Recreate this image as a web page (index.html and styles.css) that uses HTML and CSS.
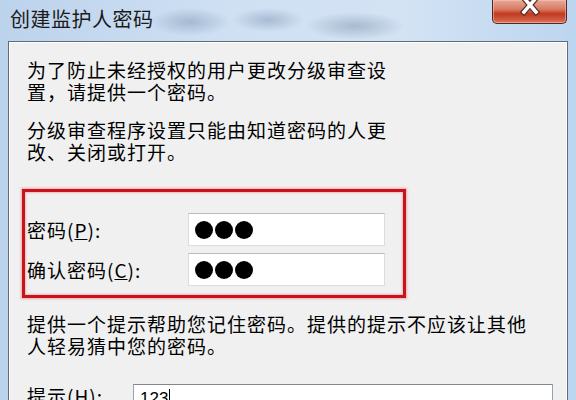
FILE: index.html
```html
<!DOCTYPE html>
<html lang="zh-CN">
<head>
    <meta charset="UTF-8">
    <title>创建监护人密码</title>
    <link rel="stylesheet" href="styles.css">
</head>
<body>
    <div class="window">
        <div class="titlebar">
            <span class="title">创建监护人密码</span>
            <div class="close-btn">
                <svg width="26" height="16" viewBox="0 0 26 16">
                    <path d="M7 -2 L19 12 M19 -2 L7 12" stroke="#5a2b25" stroke-width="6" stroke-linecap="square"/>
                    <path d="M7 -2 L19 12 M19 -2 L7 12" stroke="#ffffff" stroke-width="3.6" stroke-linecap="square"/>
                </svg>
            </div>
        </div>

        <div class="panel">
            <p class="text first">为了防止未经授权的用户更改分级审查设<br>置，请提供一个密码。</p>
            <p class="text second">分级审查程序设置只能由知道密码的人更<br>改、关闭或打开。</p>

            <div class="highlight">
                <div class="field-row">
                    <label>密码(<u>P</u>):</label>
                    <div class="input">
                        <span class="dot"></span><span class="dot"></span><span class="dot"></span>
                    </div>
                </div>
                <div class="field-row">
                    <label>确认密码(<u>C</u>):</label>
                    <div class="input">
                        <span class="dot"></span><span class="dot"></span><span class="dot"></span>
                    </div>
                </div>
            </div>

            <p class="text third">提供一个提示帮助您记住密码。提供的提示不应该让其他<br>人轻易猜中您的密码。</p>

            <div class="hint-row">
                <label>提示(<u>H</u>):</label>
                <div class="input hint-input">123<span class="caret"></span></div>
            </div>
        </div>
    </div>
</body>
</html>
```

FILE: styles.css
```css
body {
    margin: 0;
    width: 576px;
    height: 400px;
    overflow: hidden;
    font-family: "Noto Sans CJK SC", "Noto Sans", sans-serif;
    color: #000000;
    background-color: #b9d2ec;
}

.window {
    height: 400px;
    background:
        radial-gradient(ellipse 40px 14px at 190px 22px, rgba(120, 140, 170, 0.45), rgba(120, 140, 170, 0) 100%),
        radial-gradient(ellipse 36px 12px at 268px 20px, rgba(110, 130, 160, 0.4), rgba(110, 130, 160, 0) 100%),
        radial-gradient(ellipse 50px 14px at 355px 26px, rgba(110, 125, 150, 0.4), rgba(110, 125, 150, 0) 100%),
        linear-gradient(to right, #bcd3ec 0%, #cfe0f3 40%, #d3e3f4 70%, #bcd5ef 100%);
}

.titlebar {
    height: 41px;
    display: flex;
    align-items: flex-start;
}

.title {
    margin-left: 10px;
    margin-top: 6px;
    font-size: 20px;
    line-height: 26px;
    letter-spacing: 0.5px;
    color: #1b1b1b;
}

.close-btn {
    margin-left: auto;
    margin-right: 9px;
    width: 73px;
    height: 23px;
    border: 1px solid #4e2a26;
    border-top: none;
    border-radius: 0 0 5px 5px;
    background: linear-gradient(to bottom, #e7aa98 0%, #d77a63 40%, #c2391f 60%, #cf5a40 85%, #dc7a60 100%);
    box-shadow: inset 0 0 0 1px rgba(255, 200, 190, 0.5);
    display: flex;
    justify-content: center;
    align-items: flex-start;
}

.panel {
    margin: 0 8px;
    height: 380px;
    border: 1px solid #5f6b78;
    box-shadow: inset 0 0 0 1px #ffffff;
    background-color: #f0f0f0;
    padding-left: 18px;
}

.text {
    margin: 0;
    font-size: 19px;
    line-height: 22px;
    letter-spacing: 1px;
}

.first {
    padding-top: 17px;
}

.second {
    margin-top: 16px;
}

.highlight {
    margin-top: 26px;
    margin-left: -5px;
    width: 384px;
    height: 109px;
    border: 3px solid #c7141c;
    box-shadow: 0 0 2px 1px rgba(240, 120, 120, 0.6), inset 0 0 2px 1px rgba(240, 130, 130, 0.5);
    padding: 21px 0 0 2px;
    box-sizing: border-box;
    display: flex;
    flex-direction: column;
    gap: 7px;
}

.field-row {
    display: flex;
    align-items: center;
}

.field-row label {
    width: 161px;
    font-size: 19px;
    letter-spacing: 1px;
}

.input {
    width: 197px;
    height: 33px;
    background-color: #ffffff;
    border: 1px solid #d9dde2;
    border-top-color: #b7bcc3;
    display: flex;
    align-items: center;
    padding-left: 6px;
    box-sizing: border-box;
    gap: 2px;
}

.dot {
    width: 18px;
    height: 18px;
    border-radius: 50%;
    background-color: #000000;
}

.third {
    margin-top: 15px;
}

.hint-row {
    margin-top: 27px;
    display: flex;
    align-items: flex-start;
}

.hint-row label {
    width: 106px;
    font-size: 19px;
    line-height: 24px;
    letter-spacing: 1px;
}

.hint-input {
    width: 420px;
    height: 34px;
    border-color: #9aa2ab;
    border-top-color: #7f8791;
    align-items: flex-start;
    padding-top: 4px;
    font-family: "Liberation Sans", sans-serif;
    font-size: 17px;
    gap: 0;
}

.caret {
    display: inline-block;
    width: 1px;
    height: 19px;
    margin-left: 1px;
    background-color: #000000;
}
```
